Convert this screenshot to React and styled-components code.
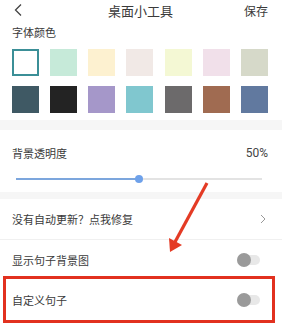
import styled, { createGlobalStyle } from 'styled-components';

const GlobalStyle = createGlobalStyle`
  html, body {
    margin: 0;
    padding: 0;
    background: #fff;
  }
  body {
    font-family: 'Noto Sans CJK SC', 'Noto Sans', sans-serif;
    color: #3a3a3a;
  }
`;

const fontColors = [
  '#ffffff', '#c6ead9', '#fdf1d0', '#f1e9e6', '#f4f8d4', '#f1e0ea', '#d6d9c9',
  '#3f5964', '#232323', '#a597c9', '#80c7cf', '#6c6a6b', '#a06b51', '#61799f',
];

const App = () => {
  const opacity = 50;

  return (
    <Page>
      <GlobalStyle />
      <Header>
        <BackButton>
          <svg width='10' height='14' viewBox='0 0 10 14'>
            <polyline points='8,1.5 2.5,7 8,12.5' fill='none' stroke='#444' strokeWidth='1.3' />
          </svg>
        </BackButton>
        <Title>桌面小工具</Title>
        <HeaderAction>保存</HeaderAction>
      </Header>

      <ColorSection>
        <Label>字体颜色</Label>
        <SwatchGrid>
          {fontColors.map((c, i) => (
            <Swatch key={c} color={c} selected={i === 0} />
          ))}
        </SwatchGrid>
      </ColorSection>

      <Band height={10} />

      <OpacitySection>
        <LabelRow>
          <Label>背景透明度</Label>
          <Value>{opacity}%</Value>
        </LabelRow>
        <Slider>
          <Track />
          <Fill style={{ width: `${opacity}%` }} />
          <Thumb style={{ left: `${opacity}%` }} />
        </Slider>
      </OpacitySection>

      <Band height={7} />

      <Row divider>
        <RowText>没有自动更新？点我修复</RowText>
        <svg width='6' height='10' viewBox='0 0 6 10'>
          <polyline points='1,1 5,5 1,9' fill='none' stroke='#999' strokeWidth='1' />
        </svg>
      </Row>
      <Row>
        <RowText>显示句子背景图</RowText>
        <Toggle />
      </Row>
      <Row>
        <RowText>自定义句子</RowText>
        <Toggle />
        <HighlightBox />
      </Row>

      <Arrow width='282' height='328' viewBox='0 0 282 328'>
        <line x1='207' y1='183' x2='175' y2='242' stroke='#e43b25' strokeWidth='3.2' />
        <polygon points='170,252 169,238 182,245' fill='#e43b25' />
      </Arrow>
    </Page>
  );
};

export default App;

const Page = styled.div`
  position: relative;
  width: 282px;
  height: 328px;
  overflow: hidden;
  background: #fff;
`;

const Header = styled.div`
  display: grid;
  grid-template-columns: 1fr auto 1fr;
  align-items: center;
  height: 20px;
  padding: 0 14px 0 13px;
`;

const BackButton = styled.div`
  display: flex;
  align-items: center;
`;

const Title = styled.div`
  font-size: 13px;
  color: #3a3a3a;
`;

const HeaderAction = styled.div`
  justify-self: end;
  font-size: 12px;
  color: #3a3a3a;
`;

const ColorSection = styled.div`
  padding: 4px 14px 7px 12px;
`;

const Label = styled.div`
  font-size: 11px;
  line-height: 16px;
  color: #3a3a3a;
`;

const SwatchGrid = styled.div`
  display: grid;
  grid-template-columns: repeat(7, 27px);
  grid-auto-rows: 27px;
  justify-content: space-between;
  row-gap: 10px;
  margin-top: 9px;
`;

const Swatch = styled.div`
  box-sizing: border-box;
  background: ${(props) => props.color};
  border: ${(props) => (props.selected ? '2px solid #3b8f97' : 'none')};
`;

const Band = styled.div`
  height: ${(props) => props.height}px;
  background: #f6f6f6;
`;

const OpacitySection = styled.div`
  padding: 15px 14px 4px 12px;
`;

const LabelRow = styled.div`
  display: flex;
  align-items: center;
  justify-content: space-between;
`;

const Value = styled.div`
  font-size: 12px;
  line-height: 16px;
  color: #444;
  font-family: 'Roboto', sans-serif;
`;

const Slider = styled.div`
  position: relative;
  height: 18px;
  margin: 9px 6px 0 4px;
`;

const Track = styled.div`
  position: absolute;
  left: 0;
  right: 0;
  top: 8px;
  height: 2px;
  background: #e3e3e3;
`;

const Fill = styled.div`
  position: absolute;
  left: 0;
  top: 8px;
  height: 2px;
  background: #7ca6dd;
`;

const Thumb = styled.div`
  position: absolute;
  top: 5px;
  width: 8px;
  height: 8px;
  margin-left: -4px;
  border-radius: 50%;
  background: #6ea1ea;
`;

const Row = styled.div`
  position: relative;
  display: flex;
  align-items: center;
  justify-content: space-between;
  height: 40px;
  padding: 0 16px 0 12px;
  border-bottom: ${(props) => (props.divider ? '1px solid #f0f0f0' : 'none')};
`;

const RowText = styled.div`
  font-size: 11px;
  color: #3a3a3a;
`;

const Toggle = styled.div`
  position: relative;
  width: 23px;
  height: 10px;
  margin-right: 6px;
  border-radius: 5px;
  background: #e8e8e8;

  &::before {
    content: '';
    position: absolute;
    left: 0;
    top: -2px;
    width: 14px;
    height: 14px;
    border-radius: 50%;
    background: #9a9a9a;
  }
`;

const HighlightBox = styled.div`
  position: absolute;
  left: 3px;
  right: 7px;
  top: -4px;
  bottom: -3px;
  border: 3px solid #e2311f;
  pointer-events: none;
`;

const Arrow = styled.svg`
  position: absolute;
  left: 0;
  top: 0;
  pointer-events: none;
`;
